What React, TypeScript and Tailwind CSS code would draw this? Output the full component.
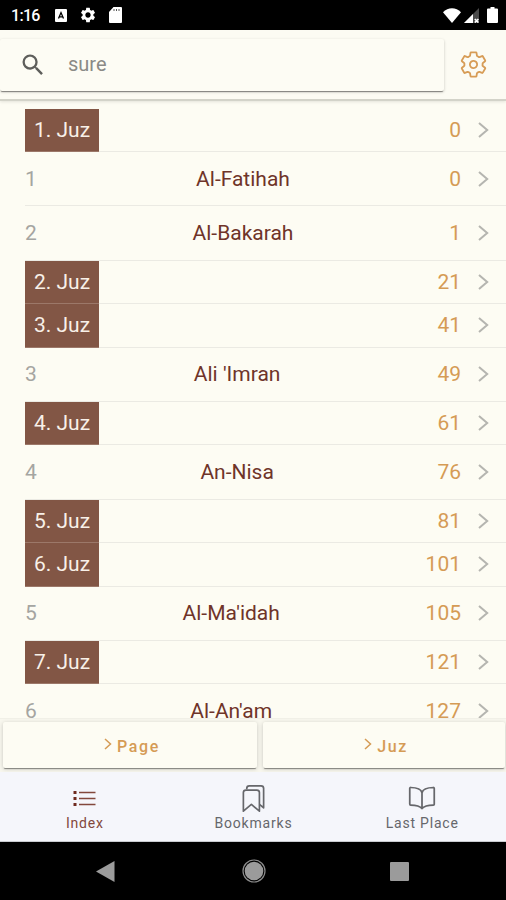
import React from "react";
import {
  IoBookmarksOutline,
  IoBookOutline,
  IoSettingsOutline,
} from "react-icons/io5";
import { MdSearch, MdSettings } from "react-icons/md";

interface JuzRow {
  type: "juz";
  id: number;
  page: number;
}

interface SurahRow {
  type: "surah";
  id: number;
  name: string;
  page: number;
}

type IndexRow = JuzRow | SurahRow;

const rows: IndexRow[] = [
  { type: "juz", id: 1, page: 0 },
  { type: "surah", id: 1, name: "Al-Fatihah", page: 0 },
  { type: "surah", id: 2, name: "Al-Bakarah", page: 1 },
  { type: "juz", id: 2, page: 21 },
  { type: "juz", id: 3, page: 41 },
  { type: "surah", id: 3, name: "Ali 'Imran", page: 49 },
  { type: "juz", id: 4, page: 61 },
  { type: "surah", id: 4, name: "An-Nisa", page: 76 },
  { type: "juz", id: 5, page: 81 },
  { type: "juz", id: 6, page: 101 },
  { type: "surah", id: 5, name: "Al-Ma'idah", page: 105 },
  { type: "juz", id: 7, page: 121 },
  { type: "surah", id: 6, name: "Al-An'am", page: 127 },
];

const StatusBar = () => (
  <div className="flex h-[30px] shrink-0 items-center bg-black pl-[11px] pr-[8px] text-white">
    <span className="w-[44px] pt-[1px] text-[16px] font-medium tracking-[-0.7px]">1:16</span>
    <svg width="12" height="13" viewBox="0 0 12 13">
      <rect width="12" height="13" rx="1" fill="#fff" />
      <path d="M3.5 9.6 6 3.6l2.5 6M4.5 7.8h3" fill="none" stroke="#000" strokeWidth="1.3" />
    </svg>
    <MdSettings className="ml-[12px] h-[18px] w-[18px]" />
    <svg className="ml-[12px]" width="13" height="16" viewBox="0 0 13 16">
      <path d="M4.5 0H12a1 1 0 0 1 1 1v14a1 1 0 0 1-1 1H1a1 1 0 0 1-1-1V5z" fill="#fff" />
      <path d="M5 2v2M7.5 2v2M10 2v2" stroke="#555" strokeWidth="1" />
    </svg>
    <div className="flex-1" />
    <svg width="18" height="15" viewBox="0 0 18 15">
      <path d="M0 4.2C5 -1.2 13 -1.2 18 4.2L9 15z" fill="#fff" />
    </svg>
    <svg className="ml-[3px]" width="15" height="15" viewBox="0 0 15 15">
      <path d="M15 0v15H0z" fill="#4a4a4a" />
      <path d="M9 6v9H0z" fill="#fff" />
      <path d="m10.8 11 3.6 3.6m0-3.6-3.6 3.6" stroke="#fff" strokeWidth="1.6" />
    </svg>
    <svg className="ml-[8px]" width="11" height="16" viewBox="0 0 11 16">
      <path d="M3.5 0h4v1.6H10a1 1 0 0 1 1 1V15a1 1 0 0 1-1 1H1a1 1 0 0 1-1-1V2.6a1 1 0 0 1 1-1h2.5z" fill="#fff" />
    </svg>
  </div>
);

const Header = () => (
  <header className="z-10 flex h-[71px] shrink-0 items-start border-b-2 border-[#d3d3c9] bg-[#fcfbf3] pt-[9px] shadow-[0_1px_3px_rgba(0,0,0,0.1)]">
    <div className="flex h-[52px] w-[444px] items-center rounded-[2px] bg-[#fdfcf4] pl-[19px] shadow-[0_2px_1px_-1px_rgba(0,0,0,0.4),0_1px_3px_rgba(0,0,0,0.22)]">
      <MdSearch className="h-[28px] w-[28px] text-[#5e5e5b]" />
      <span className="-mt-[2px] ml-[21px] text-[20px] text-[#8a8a86]">sure</span>
    </div>
    <IoSettingsOutline className="ml-[15px] mt-[11px] h-[29px] w-[29px] text-[#d79c56]" />
  </header>
);

const Row: React.FC<{ row: IndexRow }> = ({ row }) => {
  const isJuz = row.type === "juz";

  return (
    <div className={`flex pl-[25px] ${isJuz ? "h-[43.5px]" : "h-[54.25px]"}`}>
      <div className="flex flex-1 items-center border-b border-[#ebeae3] pr-[15px]">
        <div className="flex h-full flex-1 items-center justify-between text-[21px]">
          {isJuz ? (
            <div className="flex h-[calc(100%+1px)] w-[74px] items-center justify-center self-start border-b border-[#9c7869] bg-[#825645] pt-px text-[#f8f0e8]">
              {row.id}. Juz
            </div>
          ) : (
            <>
              <span className="pt-[2px] text-[#a5a5a1]">{row.id}</span>
              <span className="pt-[2px] text-[#6f3429]">{row.name}</span>
            </>
          )}
          <span className="pt-[1.5px] text-[#d59b55]">{row.page}</span>
        </div>
        <svg className="ml-[16px]" width="14" height="18" viewBox="0 0 14 18">
          <path d="m2 2 8.2 7L2 16" fill="none" stroke="#b5b5b0" strokeWidth="2" />
        </svg>
      </div>
    </div>
  );
};

const JumpButton = ({ label, className }: { label: string; className: string }) => (
  <button
    className={`flex h-[46px] items-center justify-center rounded-[2px] bg-[#fdfcf3] pl-[4px] pt-[3px] text-[16px] font-medium tracking-[1.6px] text-[#d59b55] shadow-[0_2px_1px_-1px_rgba(0,0,0,0.4),0_1px_4px_rgba(0,0,0,0.2)] ${className}`}
  >
    <svg className="mb-[5px] mr-[5px]" width="8" height="12" viewBox="0 0 8 12">
      <path d="m1 1 5.5 5L1 11" fill="none" stroke="currentColor" strokeWidth="1.5" />
    </svg>
    {label}
  </button>
);

const ListIcon = () => (
  <svg width="23" height="17" viewBox="0 0 23 17">
    <path d="M6 2.5h16.5M6 8.5h16.5M6 14.5h16.5" stroke="#83483c" strokeWidth="1.6" />
    <path d="M.5 2.5h3M.5 8.5h3M.5 14.5h3" stroke="#6f2b20" strokeWidth="3" />
  </svg>
);

const tabs = [
  { label: "Index", icon: <ListIcon />, active: true },
  { label: "Bookmarks", icon: <IoBookmarksOutline className="h-[27px] w-[27px]" />, active: false },
  { label: "Last Place", icon: <IoBookOutline className="h-[28px] w-[28px]" />, active: false },
];

const App = () => {
  return (
    <div className="flex h-[900px] w-[506px] flex-col overflow-hidden bg-[#fdfcf3] font-['Roboto',sans-serif]">
      <StatusBar />
      <Header />

      <main className="min-h-0 flex-1 overflow-hidden pt-[7.6px]">
        {rows.map((row) => (
          <Row key={`${row.type}-${row.id}`} row={row} />
        ))}
      </main>

      <div className="z-10 flex h-[54px] shrink-0 gap-[6px] border-t border-[#f1f0e7] bg-[#f8f7ee] pl-[3px] pr-px pt-[3px]">
        <JumpButton label="Page" className="w-[254px]" />
        <JumpButton label="Juz" className="flex-1" />
      </div>

      <nav className="z-10 flex h-[70px] shrink-0 border-b border-[#c9cbd0] bg-[#f5f6fb]">
        {tabs.map((tab) => (
          <div
            key={tab.label}
            className={`flex flex-1 flex-col items-center pl-px pt-[11px] ${
              tab.active ? "text-[#83483c]" : "text-[#66676b]"
            }`}
          >
            <div className="flex h-[30px] items-center">{tab.icon}</div>
            <span className="text-[14px] leading-[20px] tracking-[0.8px]">{tab.label}</span>
          </div>
        ))}
      </nav>

      <div className="flex h-[58px] shrink-0 items-center bg-black pl-[96px]">
        <svg width="19" height="21" viewBox="0 0 19 21">
          <path d="M0 10.5 18.5 0v21z" fill="#9b9b9b" />
        </svg>
        <svg className="ml-[127px]" width="24" height="24" viewBox="0 0 24 24">
          <circle cx="12" cy="12" r="11" fill="none" stroke="#8c8c8c" strokeWidth="1.2" />
          <circle cx="12" cy="12" r="9.3" fill="#9b9b9b" />
        </svg>
        <div className="ml-[124px] h-[19px] w-[19px] rounded-[1px] bg-[#9b9b9b]" />
      </div>
    </div>
  );
};

export default App;
